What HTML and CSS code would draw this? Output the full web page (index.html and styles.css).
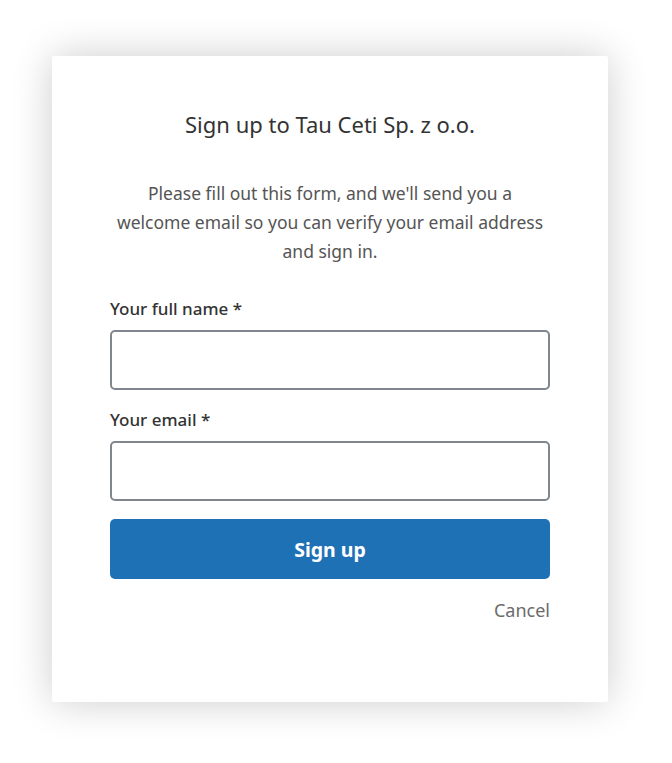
FILE: index.html
```html
<!DOCTYPE html>
<html lang="en">
<head>
    <meta charset="UTF-8">
    <meta name="viewport" content="width=device-width, initial-scale=1.0">
    <title>Sign up</title>
    <link rel="stylesheet" href="styles.css">
</head>
<body>
    <div class="card">
        <h2 class="title">Sign up to Tau Ceti Sp. z o.o.</h2>
        <p class="intro">Please fill out this form, and we'll send you a welcome email so you can verify your email address and sign in.</p>
        <form class="signup-form">
            <div class="form-group">
                <label for="fullName">Your full name *</label>
                <input type="text" id="fullName" required>
            </div>
            <div class="form-group">
                <label for="email">Your email *</label>
                <input type="email" id="email" required>
            </div>
            <button type="submit" class="primary">Sign up</button>
            <div class="actions">
                <a href="#" class="cancel">Cancel</a>
            </div>
        </form>
    </div>
</body>
</html>
```

FILE: styles.css
```css
body {
    font-family: "Noto Sans", "Open Sans", sans-serif;
    margin: 0;
    padding: 56px 0 61px 52px;
    background-color: #ffffff;
    color: #333333;
}
.card {
    background: white;
    width: 556px;
    box-sizing: border-box;
    padding: 54px 58px 79px 58px;
    border-radius: 2px;
    box-shadow: 0 0 40px rgba(0,0,0,0.2);
}
.title {
    font-size: 22px;
    font-weight: 400;
    line-height: 28px;
    text-align: center;
    margin: 0 0 41px 0;
    color: #333333;
}
.intro {
    font-size: 17.5px;
    line-height: 29px;
    text-align: center;
    margin: 0 0 31px 0;
    color: #555555;
}
.form-group {
    margin-bottom: 18px;
}
label {
    display: block;
    font-size: 17px;
    font-weight: 500;
    line-height: 24px;
    margin-bottom: 9px;
    color: #333333;
}
input {
    display: block;
    width: 100%;
    height: 60px;
    padding: 8px 12px;
    border: 2px solid #80868d;
    border-radius: 5px;
    box-sizing: border-box;
    font-size: 16px;
}
.form-group:last-of-type {
    margin-bottom: 16px;
}
button.primary {
    display: block;
    width: 100%;
    height: 60px;
    background-color: #1f71b6;
    color: white;
    border: none;
    border-radius: 5px;
    font-family: inherit;
    font-size: 19.5px;
    font-weight: 700;
    cursor: pointer;
    margin: 0 0 19px 0;
}
.actions {
    text-align: right;
    line-height: 24px;
}
.cancel {
    font-size: 18px;
    color: #6b6b6b;
    text-decoration: none;
}
```
